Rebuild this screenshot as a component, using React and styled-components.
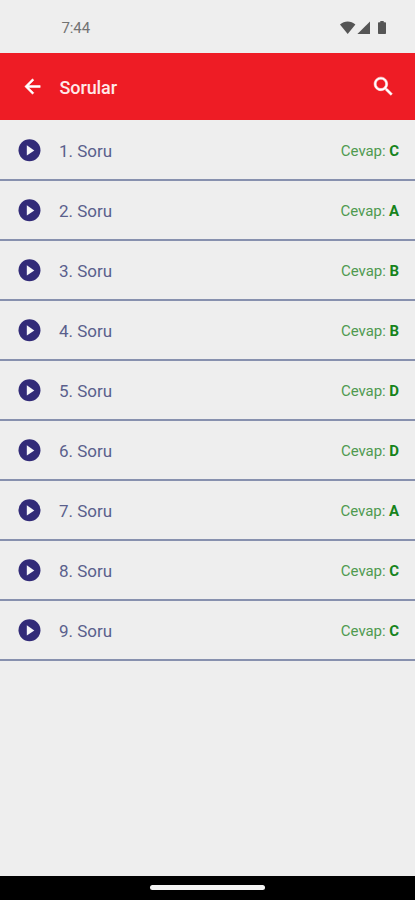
import styled, { createGlobalStyle } from "styled-components";

const GlobalStyle = createGlobalStyle`
  body {
    margin: 0;
    background: #eeeeee;
    font-family: Roboto, "Liberation Sans", sans-serif;
  }
`;

const Screen = styled.div`
  height: 900px;
  display: flex;
  flex-direction: column;
  background: #eeeeee;
  overflow: hidden;
`;

const StatusBar = styled.div`
  height: 53px;
  box-sizing: border-box;
  display: flex;
  align-items: center;
  justify-content: space-between;
  padding: 3px 27px 0 61.5px;
`;

const Clock = styled.span`
  font-size: 15px;
  line-height: 18px;
  letter-spacing: -0.1px;
  color: #737373;
`;

const StatusIcons = styled.svg`
  display: block;
  fill: #555555;
`;

const Header = styled.header`
  height: 67px;
  box-sizing: border-box;
  display: flex;
  align-items: center;
  padding: 0 19px 0 21px;
  background: #ee1c25;
`;

const HeaderIcon = styled.svg`
  width: ${(props) => props.$size}px;
  height: ${(props) => props.$size}px;
  fill: #ffffff;
`;

const Title = styled.h1`
  flex: 1;
  margin: 2px 0 0 15.5px;
  font-size: 18px;
  font-weight: 500;
  line-height: 22px;
  letter-spacing: -0.1px;
  color: #ffe9e9;
`;

const List = styled.ul`
  flex: 1;
  margin: 0;
  padding: 1px 0 0;
  list-style: none;
`;

const Row = styled.li`
  height: 60px;
  box-sizing: border-box;
  display: flex;
  align-items: center;
  padding: 0 16px 0 18px;
  border-bottom: 2px solid #8790ae;
`;

const PlayIcon = styled.svg`
  width: 23px;
  height: 23px;
`;

const Question = styled.span`
  flex: 1;
  margin-left: 18px;
  padding-top: 1px;
  font-size: 17px;
  line-height: 20px;
  color: #5a5f8c;
`;

const Answer = styled.span`
  padding-top: 1px;
  font-size: 15px;
  line-height: 18px;
  letter-spacing: -0.05px;
  color: #4f9a50;

  b {
    font-weight: 700;
    color: #16831b;
  }
`;

const NavBar = styled.div`
  height: 24px;
  display: flex;
  justify-content: center;
  background: #000000;
`;

const Handle = styled.div`
  width: 115px;
  height: 5px;
  margin-top: 9px;
  border-radius: 3px;
  background: #f5f5f5;
`;

const answers = ["C", "A", "B", "B", "D", "D", "A", "C", "C"];

const App = () => {
    return <>
        <GlobalStyle />
        <Screen>
            <StatusBar>
                <Clock>7:44</Clock>
                <StatusIcons width="48" height="16" viewBox="0 0 48 16">
                    <path d="M0 4.5C4.4 0.6 11 0.6 15.4 4.5L7.7 14Z" />
                    <path d="M30 1.4V14H17.4Z" />
                    <path d="M40.3 1H43.7V2.3H45.2Q46 2.3 46 3.1V13.2Q46 14 45.2 14H38.8Q38 14 38 13.2V3.1Q38 2.3 38.8 2.3H40.3Z" />
                </StatusIcons>
            </StatusBar>
            <Header>
                <HeaderIcon $size={23} viewBox="0 0 24 24">
                    <path d="M20 11H7.83l5.59-5.59L12 4l-8 8 8 8 1.41-1.41L7.83 13H20v-2z" stroke="#fff" strokeWidth="0.6" />
                </HeaderIcon>
                <Title>Sorular</Title>
                <HeaderIcon $size={25} viewBox="0 0 24 24">
                    <path d="M15.5 14h-.79l-.28-.27C15.41 12.59 16 11.11 16 9.5 16 5.91 13.09 3 9.5 3S3 5.91 3 9.5 5.91 16 9.5 16c1.61 0 3.09-.59 4.23-1.57l.27.28v.79l5 4.99L20.49 19l-4.99-5zm-6 0C7.01 14 5 11.99 5 9.5S7.01 5 9.5 5 14 7.01 14 9.5 11.99 14 9.5 14z" stroke="#fff" strokeWidth="0.5" />
                </HeaderIcon>
            </Header>
            <List>
                {answers.map((answer, i) => <Row key={i}>
                    <PlayIcon viewBox="0 0 23 23">
                        <circle cx="11.5" cy="11.3" r="11" fill="#322b78" />
                        <path d="M8.8 6.3V16.5L16.3 11.4Z" fill="#f4f4f8" />
                    </PlayIcon>
                    <Question>{i + 1}. Soru</Question>
                    <Answer>Cevap: <b>{answer}</b></Answer>
                </Row>)}
            </List>
            <NavBar>
                <Handle />
            </NavBar>
        </Screen>
    </>
};

export default App;
